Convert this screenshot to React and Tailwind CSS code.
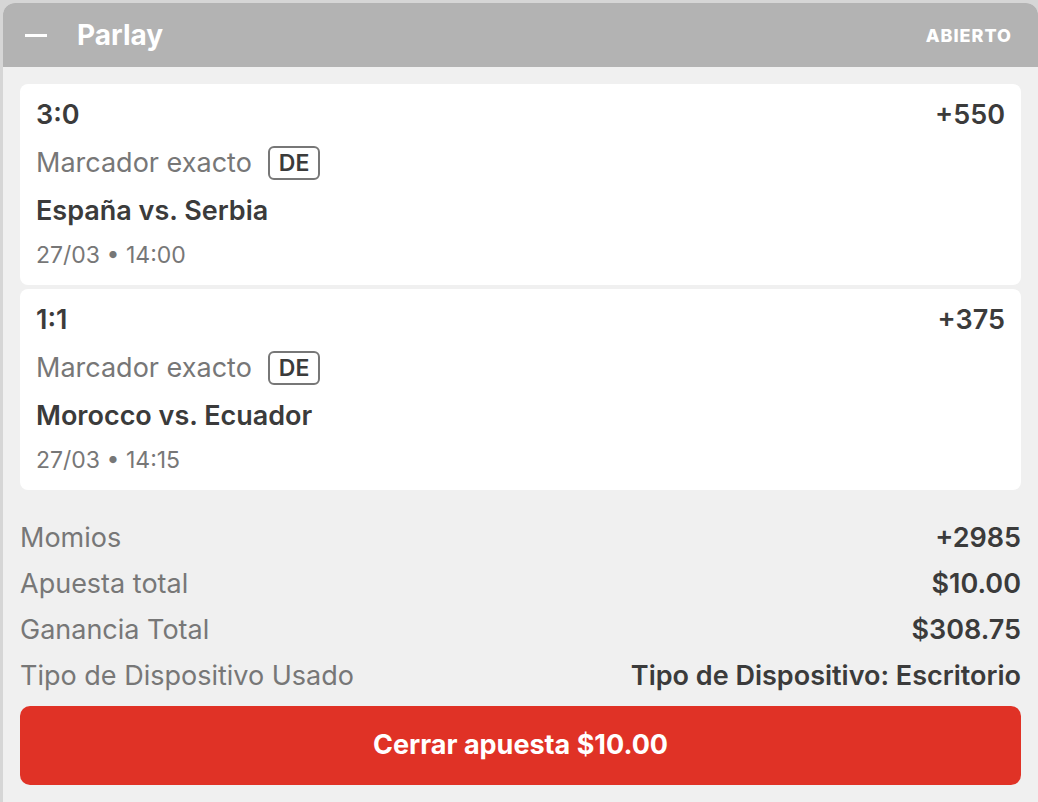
const legs = [
    { pick: '3:0', odds: '+550', market: 'Marcador exacto', tag: 'DE', match: 'España vs. Serbia', when: '27/03 • 14:00' },
    { pick: '1:1', odds: '+375', market: 'Marcador exacto', tag: 'DE', match: 'Morocco vs. Ecuador', when: '27/03 • 14:15' },
];

const totals = [
    { label: 'Momios', value: '+2985' },
    { label: 'Apuesta total', value: '$10.00' },
    { label: 'Ganancia Total', value: '$308.75' },
    { label: 'Tipo de Dispositivo Usado', value: 'Tipo de Dispositivo: Escritorio' },
];

function LegCard({ leg }) {
    return (
        <div className="flex flex-col gap-4 rounded-lg bg-white px-4 pb-[17px] pt-[16px]">
            <div className="flex h-[30px] items-center justify-between text-[27px] font-semibold text-[#3b3b3b]">
                <span>{leg.pick}</span>
                <span>{leg.odds}</span>
            </div>
            <div className="flex h-[34px] items-center gap-[16px]">
                <span className="text-[27px] text-[#777777]">{leg.market}</span>
                <span className="flex h-[34px] items-center rounded-md border-2 border-[#777777] px-[9px] text-[23px] font-semibold text-[#3b3b3b]">
                    {leg.tag}
                </span>
            </div>
            <div className="flex h-[30px] items-center text-[27px] font-semibold text-[#3b3b3b]">
                {leg.match}
            </div>
            <div className="flex h-[26px] items-center text-[23px] text-[#777777]">
                {leg.when}
            </div>
        </div>
    );
}

export default function App() {
    return (
        <div
            className="min-h-[802px] bg-[#d6d6d6] pl-[3px] pt-[3px]"
            style={{ fontFamily: 'Inter, "Noto Sans", sans-serif' }}
        >
            <div className="w-[1035px] overflow-hidden rounded-t-xl bg-[#f0f0f0] pb-[17px]">
                {/* header */}
                <div className="flex h-16 items-center justify-between bg-[#b3b3b3] pl-[22px] pr-[26px]">
                    <div className="flex items-center gap-[30px]">
                        <span className="block h-[3px] w-[22px] bg-white" />
                        <span className="text-[28px] font-bold text-white">Parlay</span>
                    </div>
                    <span className="text-[18px] font-extrabold uppercase tracking-[1px] text-white">Abierto</span>
                </div>

                <div className="px-[17px] pt-[17px]">
                    <div className="flex flex-col gap-[4px]">
                        {legs.map((leg) => (
                            <LegCard key={leg.pick} leg={leg} />
                        ))}
                    </div>

                    <div className="mt-[33px] flex flex-col gap-4">
                        {totals.map((row) => (
                            <div key={row.label} className="flex h-[30px] items-center justify-between text-[27px]">
                                <span className="text-[#777777]">{row.label}</span>
                                <span className="font-semibold text-[#3b3b3b]">{row.value}</span>
                            </div>
                        ))}
                    </div>

                    <button
                        type="button"
                        className="mt-[15px] flex h-[79px] w-full items-center justify-center rounded-[10px] bg-[#e03226] text-[27px] font-bold text-white"
                    >
                        Cerrar apuesta $10.00
                    </button>
                </div>
            </div>
        </div>
    );
}
